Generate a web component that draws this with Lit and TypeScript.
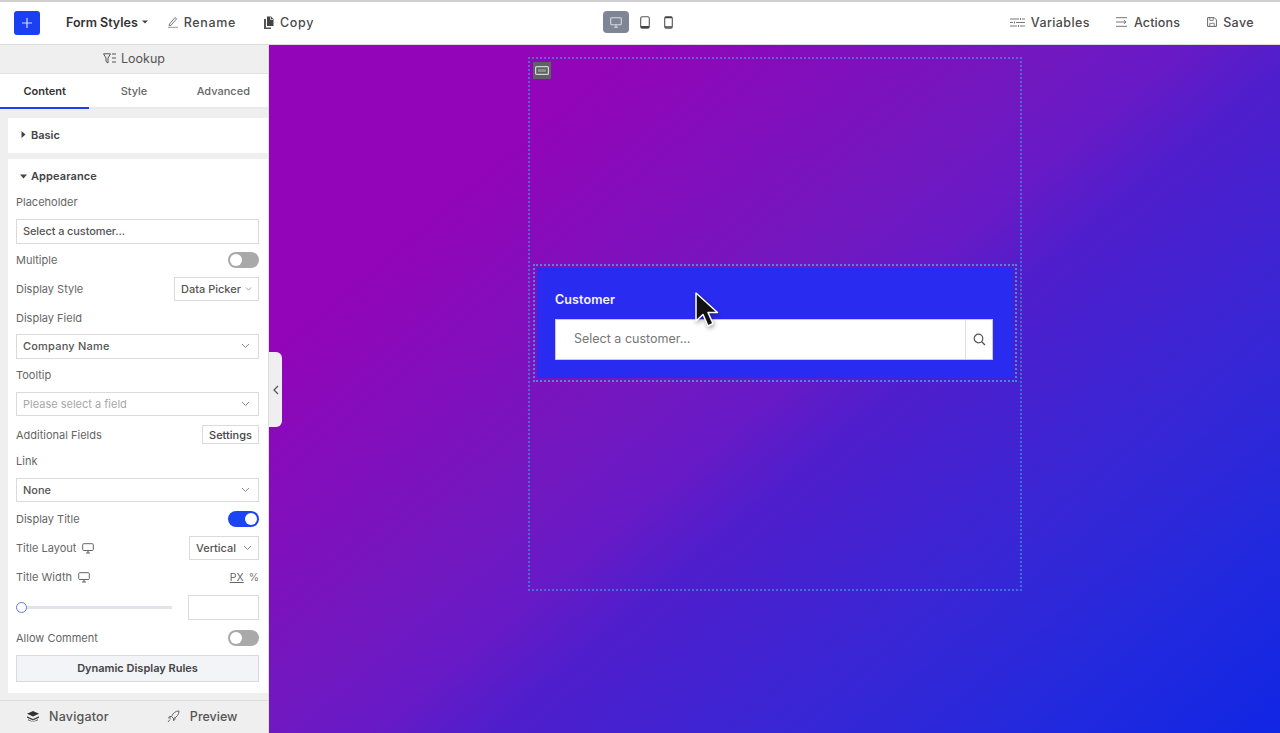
import { LitElement, html, css } from "lit";
import { customElement } from "lit/decorators.js";

const chev = html`<svg class="chev" width="9" height="6" viewBox="0 0 9 6"><path d="M1 1l3.500 3.500L8 1" fill="none" stroke="#8a8a8a" stroke-width="1"/></svg>`;
const monitor = html`<svg class="mon" width="12" height="11" viewBox="0 0 12 11"><rect x=".7" y=".7" width="10.600" height="6.800" rx="1" fill="none" stroke="#666" stroke-width="1"/><path d="M4 10h4M6 7.500V10" stroke="#666" stroke-width="1.200"/></svg>`;

@customElement("app-root")
export class AppRoot extends LitElement {
  static styles = css`
    :host { display: block; width: 1280px; height: 733px; overflow: hidden; position: relative;
      font-family: Inter, "Open Sans", sans-serif; color: #444; background: #fff; }
    * { box-sizing: border-box; }
    .top { height: 45px; display: grid; grid-template-columns: 1fr auto 1fr; align-items: center;
      border-top: 2px solid #cfcfcf; background: #fff; border-bottom: 1px solid #ddd; padding: 0 18px 2px 14px; }
    .group { display: flex; align-items: center; }
    .right { justify-content: flex-end; padding-right: 8px; }
    .plus { width: 26px; height: 24px; border-radius: 3px; background: #1b40f2; display: flex; align-items: center; justify-content: center; margin-right: 26px; margin-top: 2px; }
    .ti { font-size: 12.500px; font-weight: 500; letter-spacing: .4px; color: #4a4a4a; display: flex; align-items: center; gap: 6px; white-space: nowrap; }
    .ti.strong { color: #333; font-weight: 600; letter-spacing: 0; gap: 4px; margin-right: 19px; }
    .ti.rn { margin-right: 27px; gap: 5px; letter-spacing: .65px; }
    .ti.cp { letter-spacing: .65px; }
    .ti.var { margin-right: 27px; }
    .ti.v1 { margin-right: 26px; }
    .ti.act { letter-spacing: .15px; gap: 7px; }
    .devices { display: flex; align-items: center; }
    .dev { height: 22px; display: flex; align-items: center; justify-content: center; }
    .dev.on { width: 26px; background: #7e8595; border-radius: 4px; margin-right: 11px; }
    .dev.tab2 { margin-right: 14px; }
    .main { display: flex; height: 688px; }
    .side { width: 269px; flex: none; background: #efefef; border-right: 1px solid #ddd; display: flex; flex-direction: column; }
    .lookup { height: 28px; padding-bottom: 2px; display: flex; align-items: center; justify-content: center; gap: 5px; font-size: 12.500px; color: #555; }
    .tabs { height: 36px; background: #fff; display: flex; border-top: 1px solid #e4e4e4; border-bottom: 2px solid #e8e8ee; }
    .tab { flex: 1; display: flex; align-items: center; justify-content: center; font-size: 11px; font-weight: 500; color: #666; margin-bottom: -2px; border-bottom: 2px solid transparent; }
    .tab.on { color: #333; font-weight: 600; border-bottom-color: #1b40f2; }
    .panel { background: #fff; margin-left: 8px; }
    .head { font-size: 11px; font-weight: 600; color: #444; display: flex; align-items: center; gap: 5px; padding-left: 12px; }
    .basic { height: 35px; margin-top: 9px; }
    .basic .head { height: 33px; padding-left: 13px; }
    .app { height: 534px; margin-top: 6px; padding: 0 9px 0 8px; display: flex; flex-direction: column; gap: 8px; }
    .app .head { height: 34px; margin-bottom: -8px; padding-left: 4px; gap: 4px; letter-spacing: .1px; }
    .row { height: 18px; flex: none; display: flex; align-items: center; justify-content: space-between; font-size: 11px; color: #666; }
    .row.tight { margin-top: -1px; }
    .lbl { display: flex; align-items: center; gap: 6px; }
    .box { height: 25px; flex: none; border: 1px solid #d9d9de; background: #fff; display: flex; align-items: center; justify-content: space-between;
      padding: 0 8px 0 6px; font-size: 11px; font-weight: 500; color: #555; white-space: nowrap; }
    .sel { letter-spacing: -.1px; padding-bottom: 2px; }
    .box.ph { color: #a8a8a8; font-weight: 400; }
    .box.t { margin-top: -1px; letter-spacing: .2px; padding-bottom: 1px; }
    .ctl { height: 24px; }
    .mini { height: 24px; gap: 4px; padding: 0 6px; }
    .dp { width: 85px; }
    .vt { width: 70px; }
    .cr { height: 24px; }
    .settings { width: 57px; height: 19px; border: 1px solid #d9d9de; font-size: 11px; font-weight: 500; color: #444; display: flex; align-items: center; justify-content: center; }
    .rowb { height: 19px; margin-top: 1px; }
    .toggle { width: 31px; height: 16px; border-radius: 8px; background: #a9a9a9; padding: 2px; display: flex; }
    .toggle.on { background: #1b45f2; justify-content: flex-end; }
    .toggle i { width: 12px; height: 12px; border-radius: 50%; background: #fff; }
    .units { font-size: 10.500px; color: #777; display: flex; gap: 5px; }
    .units u { color: #666; }
    .slider { height: 25px; flex: none; display: flex; align-items: center; gap: 16px; margin-top: 1px; }
    .track { flex: 1; height: 3px; background: #e2e2ea; position: relative; }
    .thumb { position: absolute; left: 0; top: -4px; width: 11px; height: 11px; border-radius: 50%; background: #fff; border: 1.500px solid #6673e6; }
    .num { width: 71px; height: 25px; border: 1px solid #d9d9de; }
    .rule { height: 27px; padding-bottom: 2px; background: #f3f4f8; border: 1px solid #d9d9de; font-size: 11px; font-weight: 600; color: #444; display: flex; align-items: center; justify-content: center; }
    .m2 { margin-top: 1px; }
    .foot { margin-top: 7px; flex: 1; padding-bottom: 2px; border-top: 1px solid #ddd; display: flex; align-items: center; font-size: 12.500px; font-weight: 500; color: #555; }
    .foot div { display: flex; align-items: center; gap: 10px; }
    .nav { margin-left: 27px; margin-right: 58px; letter-spacing: .2px; }
    .canvas { flex: 1; position: relative; padding: 12px 0 0 259px;
      background: linear-gradient(140deg, #9205b8 0%, #9205b8 20%, #7218c0 43%, #681ac6 50%, #4f1ecc 57%, #3527d6 75%, #2329dd 86%, #1126e4 100%); }
    .frame { width: 494px; height: 534px; border: 2px dotted rgba(70, 140, 225, .7); padding: 205px 3px 0; position: relative; }
    .tag { position: absolute; left: 3px; top: 3px; width: 18px; height: 17px; background: #5f6262; display: flex; align-items: center; justify-content: center; }
    .block { height: 118px; border: 2px dotted rgba(64, 165, 225, .8); padding: 2px; }
    .inner { height: 100%; background: #2a2bf0; padding: 23px 20px 0 18px; }
    .title { font-size: 12.500px; font-weight: 600; letter-spacing: .1px; color: #f5f5ff; height: 18px; line-height: 18px; margin-bottom: 10px; }
    .field { height: 41px; background: #fff; display: flex; align-items: center; border: 1px solid #c9c9dc; }
    .field span { flex: 1; padding: 0 0 2px 18px; font-size: 12.500px; color: #777; }
    .search { width: 27px; height: 100%; border-left: 1px solid #dcdce4; display: flex; align-items: center; justify-content: center; }
    .collapse { position: absolute; left: 0; top: 307px; width: 13px; height: 75px; background: #efefef; border-radius: 0 6px 6px 0; display: flex; align-items: center; justify-content: center; }
    .cursor { position: absolute; left: 425px; top: 246px; filter: drop-shadow(1px 2px 2px rgba(0,0,0,.35)); }
  `;

  private toggle(on = false) {
    return html`<div class="toggle ${on ? "on" : ""}"><i></i></div>`;
  }

  render() {
    return html`
      <div class="top">
        <div class="group">
          <div class="plus"><svg width="10" height="10" viewBox="0 0 10 10"><path d="M5 0v10M0 5h10" stroke="#d8d8ff" stroke-width="1.200"/></svg></div>
          <div class="ti strong">Form Styles <svg width="6" height="4" viewBox="0 0 6 4"><path d="M0 .5h6L3 3.500z" fill="#444"/></svg></div>
          <div class="ti rn"><svg width="12" height="12" viewBox="0 0 12 12"><path d="M2.500 8l5.500-6.500 1.600 1.300L4 9.300 2 9.700z" fill="none" stroke="#777" stroke-width="1"/><path d="M1 11.300h10" stroke="#999" stroke-width="1"/></svg>Rename</div>
          <div class="ti cp"><svg width="11" height="13" viewBox="0 0 11 13"><path d="M4 .5h4l2.500 2.500v7H4z" fill="#444"/><path d="M1 3h2v8.500h5V13H1z" fill="#555"/><path d="M7.500 1v2.500h2.500" fill="none" stroke="#fff" stroke-width=".7"/></svg>Copy</div>
        </div>
        <div class="devices">
          <div class="dev on"><svg width="12" height="11" viewBox="0 0 12 11"><rect x=".7" y=".7" width="10.600" height="7" rx="1" fill="none" stroke="#d8dae0" stroke-width="1.100"/><path d="M4 10.300h4M6 8v2" stroke="#d8dae0" stroke-width="1.100"/></svg></div>
          <div class="dev tab2"><svg width="10" height="13" viewBox="0 0 10 13"><rect x=".7" y=".7" width="8.600" height="11.600" rx="1.500" fill="none" stroke="#555" stroke-width="1.100"/><path d="M1 11h8" stroke="#444" stroke-width="2"/></svg></div>
          <div class="dev"><svg width="9" height="13" viewBox="0 0 9 13"><rect x=".7" y=".7" width="7.600" height="11.600" rx="1.500" fill="none" stroke="#555" stroke-width="1.100"/><path d="M1 11h7M1 1.500h7" stroke="#444" stroke-width="1.600"/></svg></div>
        </div>
        <div class="group right">
          <div class="ti var v1"><svg width="15" height="9" viewBox="0 0 15 9"><path d="M0 1h9M12 1h3M0 4.500h3M6 4.500h9M0 8h7M10 8h5" stroke="#777" stroke-width="1"/><path d="M10.500 0v2M4.500 3.500v2M8.500 7v2" stroke="#777" stroke-width="1"/></svg>Variables</div>
          <div class="ti var act"><svg width="11" height="10" viewBox="0 0 11 10"><path d="M0 .7h11M0 9.300h11M0 5h9" stroke="#777" stroke-width="1"/><path d="M8 3.200L10 5 8 6.800" fill="none" stroke="#777" stroke-width="1"/></svg>Actions</div>
          <div class="ti"><svg width="10" height="10" viewBox="0 0 10 10"><path d="M.6.600h6.600l2.200 2.200v6.600H.6z" fill="none" stroke="#666" stroke-width="1"/><path d="M2.800 1v2.400h3.400V1M2.800 9V6.300h4.400V9" fill="none" stroke="#666" stroke-width=".8"/></svg>Save</div>
        </div>
      </div>
      <div class="main">
        <aside class="side">
          <div class="lookup"><svg width="13" height="11" viewBox="0 0 13 11"><path d="M.5.800h7L5 5v5L3 8.500V5z" fill="none" stroke="#555" stroke-width="1"/><path d="M9 1h4M9 5h4M9 9h4" stroke="#555" stroke-width="1.100"/></svg>Lookup</div>
          <div class="tabs"><div class="tab on">Content</div><div class="tab">Style</div><div class="tab">Advanced</div></div>
          <div class="panel basic"><div class="head"><svg width="5" height="7" viewBox="0 0 5 7"><path d="M.5 0L4.500 3.500.5 7z" fill="#444"/></svg>Basic</div></div>
          <div class="panel app">
            <div class="head"><svg width="7" height="5" viewBox="0 0 7 5"><path d="M0 .5h7L3.500 4.500z" fill="#444"/></svg>Appearance</div>
            <div class="row">Placeholder</div>
            <div class="box sel">Select a customer...</div>
            <div class="row tight">Multiple${this.toggle()}</div>
            <div class="row ctl">Display Style<div class="box mini dp cr">Data Picker ${chev}</div></div>
            <div class="row">Display Field</div>
            <div class="box t">Company Name ${chev}</div>
            <div class="row tight">Tooltip</div>
            <div class="box ph cr">Please select a field ${chev}</div>
            <div class="row rowb">Additional Fields<div class="settings">Settings</div></div>
            <div class="row">Link</div>
            <div class="box cr">None ${chev}</div>
            <div class="row">Display Title${this.toggle(true)}</div>
            <div class="row ctl"><div class="lbl">Title Layout ${monitor}</div><div class="box mini vt cr">Vertical ${chev}</div></div>
            <div class="row"><div class="lbl">Title Width ${monitor}</div><div class="units"><u>PX</u><span>%</span></div></div>
            <div class="slider"><div class="track"><div class="thumb"></div></div><div class="num"></div></div>
            <div class="row m2">Allow Comment${this.toggle()}</div>
            <div class="rule">Dynamic Display Rules</div>
          </div>
          <div class="foot">
            <div class="nav"><svg width="12" height="11" viewBox="0 0 12 11"><path d="M6 0l6 2.700-6 2.700L0 2.700z" fill="#333"/><path d="M0 5.300l6 2.700 6-2.700v1.500L6 9.500 0 6.800zM1 8.200l5 2.500 5-2.500v1L6 11 1 9.200z" fill="#444"/></svg>Navigator</div>
            <div><svg width="13" height="13" viewBox="0 0 13 13"><path d="M12 1C8.500 1 6 3 4.500 6.500l2 2C10 7 12 4.500 12 1z" fill="none" stroke="#666" stroke-width="1"/><path d="M4.500 6.500H2.500L1.500 8h2.500M6.500 8.500v2l1.500-1V7.500M3 9.500L1 12" fill="none" stroke="#666" stroke-width="1"/></svg>Preview</div>
          </div>
        </aside>
        <section class="canvas">
          <div class="frame">
            <div class="tag"><svg width="14" height="9" viewBox="0 0 14 9"><rect x=".6" y=".6" width="12.800" height="7.800" rx="1" fill="none" stroke="#d5d5d5" stroke-width="1.200"/><path d="M3 3h8v3H3z" fill="#8a8d8e"/></svg></div>
            <div class="block">
              <div class="inner">
                <div class="title">Customer</div>
                <div class="field"><span>Select a customer...</span><div class="search"><svg width="13" height="13" viewBox="0 0 13 13"><circle cx="5.500" cy="5.500" r="4.300" fill="none" stroke="#555" stroke-width="1.200"/><path d="M8.700 8.700L12 12" stroke="#555" stroke-width="1.300"/></svg></div></div>
              </div>
            </div>
          </div>
          <div class="collapse"><svg width="6" height="10" viewBox="0 0 6 10"><path d="M5 1L1 5l4 4" fill="none" stroke="#555" stroke-width="1.200"/></svg></div>
          <svg class="cursor" width="26" height="38" viewBox="0 0 26 38"><path d="M2 2v28l7-6.500 5 11.500 5-2.500-5-11h9.500z" fill="#111" stroke="#fff" stroke-width="1.500" stroke-linejoin="round"/></svg>
        </section>
      </div>
    `;
  }
}
